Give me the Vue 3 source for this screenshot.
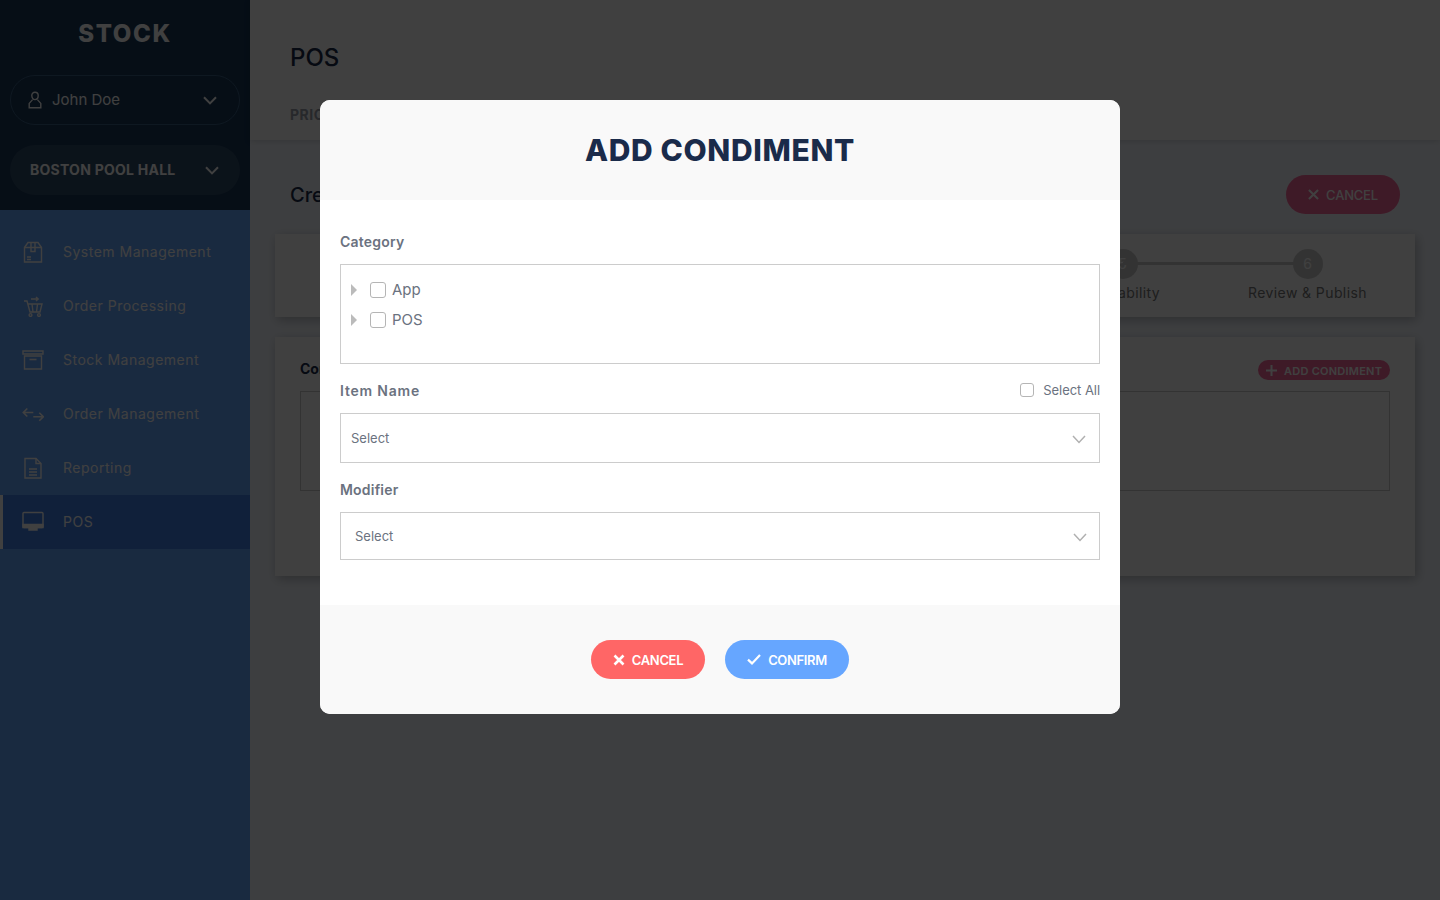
<template>
  <div class="page">
    <aside class="sidebar">
      <div class="side-top">
        <div class="brand">STOCK</div>
        <div class="user-pill">
          <svg class="user-icon" viewBox="0 0 14 18" width="14" height="18" fill="none" stroke="currentColor" stroke-width="1.4">
            <path d="M7 1.2c2 0 3.2 1.4 3.2 3.4S9 8.6 7 8.6 3.8 6.6 3.8 4.6 5 1.2 7 1.2z"/>
            <path d="M4.6 8.6 1.2 12.4v4.4h11.6v-4.4L9.4 8.6"/>
          </svg>
          <span class="user-name">John Doe</span>
          <svg class="chev" viewBox="0 0 14 9" width="14" height="9" fill="none" stroke="currentColor" stroke-width="2"><path d="M1 1.2 7 7.4l6-6.2"/></svg>
        </div>
        <div class="venue-pill">
          <span class="venue-name">BOSTON POOL HALL</span>
          <svg class="chev" viewBox="0 0 14 9" width="14" height="9" fill="none" stroke="currentColor" stroke-width="2"><path d="M1 1.2 7 7.4l6-6.2"/></svg>
        </div>
      </div>
      <nav class="side-nav">
        <a v-for="item in navItems" :key="item.label" class="nav-item" :class="{ active: item.active }">
          <svg class="nav-icon" viewBox="0 0 22 22" width="22" height="22" fill="none" stroke="currentColor" stroke-width="1.4" v-html="item.icon"></svg>
          <span class="nav-text">{{ item.label }}</span>
        </a>
      </nav>
    </aside>

    <main class="main">
      <header class="top-bar">
        <h1 class="page-title">POS</h1>
        <div class="tab-label">PRICE</div>
      </header>
      <div class="content">
        <div class="content-head">
          <h2 class="sub-title">Create</h2>
          <button class="bg-cancel">
            <svg viewBox="0 0 12 12" width="11" height="11" fill="none" stroke="currentColor" stroke-width="2.2"><path d="M1 1l10 10M11 1 1 11"/></svg>
            CANCEL
          </button>
        </div>
        <section class="card stepper">
          <div v-for="step in steps" :key="step.num" class="step">
            <div class="step-line"></div>
            <div class="step-num">{{ step.num }}</div>
            <div class="step-label">{{ step.label }}</div>
          </div>
        </section>
        <section class="card condiment">
          <div class="condiment-head">
            <span class="condiment-title">Condiment</span>
            <button class="bg-add">
              <svg viewBox="0 0 11 11" width="11" height="11" fill="none" stroke="currentColor" stroke-width="2"><path d="M5.5 0v11M0 5.5h11"/></svg>
              <span class="add-text">ADD CONDIMENT</span>
            </button>
          </div>
          <div class="condiment-box"></div>
        </section>
      </div>
    </main>

    <div class="overlay">
      <div class="modal">
        <div class="modal-head">ADD CONDIMENT</div>
        <div class="modal-body">
          <label class="field-label first">Category</label>
          <div class="tree">
            <div v-for="node in categories" :key="node" class="tree-row">
              <span class="caret"></span>
              <span class="check"></span>
              <span class="tree-text">{{ node }}</span>
            </div>
          </div>
          <div class="label-row">
            <label class="field-label item-name">Item Name</label>
            <div class="select-all"><span class="check small"></span>Select All</div>
          </div>
          <div class="select tall">
            <span>Select</span>
            <svg viewBox="0 0 14 9" width="14" height="9" fill="none" stroke="currentColor" stroke-width="1.5"><path d="M1 1l6 6.4L13 1"/></svg>
          </div>
          <label class="field-label second">Modifier</label>
          <div class="select wide">
            <span>Select</span>
            <svg viewBox="0 0 14 9" width="14" height="9" fill="none" stroke="currentColor" stroke-width="1.5"><path d="M1 1l6 6.4L13 1"/></svg>
          </div>
        </div>
        <div class="modal-foot">
          <button class="btn btn-cancel">
            <svg viewBox="0 0 12 12" width="12" height="12" fill="none" stroke="currentColor" stroke-width="2.6"><path d="M1.500 1.500l9 9M10.500 1.500l-9 9"/></svg>
            CANCEL
          </button>
          <button class="btn btn-confirm">
            <svg viewBox="0 0 14 11" width="14" height="11" fill="none" stroke="currentColor" stroke-width="2.2"><path d="M1 5.6 5 9.400 13 1"/></svg>
            CONFIRM
          </button>
        </div>
      </div>
    </div>
  </div>
</template>

<script setup>
const navItems = [
  {
    label: 'System Management',
    icon: '<path d="M2.500 6.500 6 1.500h10l3.500 5v14.500h-17z"/><path d="M2.500 6.500h17M9 1.500v9h4v-9"/><path d="M5 16h4M5 18.500h4"/>'
  },
  {
    label: 'Order Processing',
    icon: '<path d="M2 6h3l3 11h10l2-8H5.800"/><path d="M10 9l1 8M15.500 9l-1 8"/><circle cx="8.500" cy="20" r="1.400"/><circle cx="17" cy="20" r="1.400"/><path d="M9 4h7M14 2l2.200 2-2.200 2"/>'
  },
  {
    label: 'Stock Management',
    icon: '<path d="M1 2h20v3H1z"/><path d="M2.500 7h17v13h-17z"/><path d="M7.500 10.500h7" stroke-width="1.600"/>'
  },
  {
    label: 'Order Management',
    icon: '<path d="M11.300 9.500h-10M5.300 5.500l-4 4 4 4M11.300 13.700h10M17.300 9.700l4 4-4 4" stroke-width="1.600"/>'
  },
  {
    label: 'Reporting',
    icon: '<path d="M3 1.500h11l5 5v14.500H3z"/><path d="M14 1.500v5h5M7 12h8M7 15h8M7 18h8"/>'
  },
  {
    label: 'POS',
    active: true,
    icon: '<path d="M1 2.500a1 1 0 0 1 1-1h18a1 1 0 0 1 1 1v13a1 1 0 0 1-1 1H2a1 1 0 0 1-1-1z" /><path d="M1 13.500h20v3H1zM7 17h8v2H7z" fill="currentColor"/>'
  }
]

const steps = [
  { num: 1, label: '' },
  { num: 2, label: '' },
  { num: 3, label: '' },
  { num: 4, label: '' },
  { num: 5, label: 'Availability' },
  { num: 6, label: 'Review & Publish' }
]

const categories = ['App', 'POS']
</script>

<style scoped>
.page {
  position: relative;
  display: flex;
  width: 1440px;
  height: 900px;
  overflow: hidden;
  background: #f4f8ff;
  font-family: Inter, 'Open Sans', sans-serif;
  color: #1a2b4a;
}

.sidebar {
  width: 250px;
  flex-shrink: 0;
  background: #66a6ff;
  color: #fff;
}

.side-top {
  height: 210px;
  box-sizing: border-box;
  padding: 0 10px;
  background: #183858;
}

.brand {
  height: 75px;
  padding-top: 20px;
  box-sizing: border-box;
  text-align: center;
  font-size: 24px;
  line-height: 28px;
  font-weight: 800;
  letter-spacing: 1.6px;
}

.user-pill,
.venue-pill {
  display: flex;
  align-items: center;
  height: 50px;
  box-sizing: border-box;
  border-radius: 25px;
}

.user-pill {
  padding: 0 22px 0 17px;
  border: 1px solid #3a5f85;
  margin-bottom: 20px;
}

.user-name {
  flex: 1;
  margin-left: 10px;
  margin-bottom: 2px;
  font-size: 15px;
}

.venue-pill {
  padding: 0 21px 0 20px;
  background: rgba(255, 255, 255, 0.1);
}

.venue-name {
  flex: 1;
  margin-bottom: 2px;
  font-size: 14px;
  font-weight: 700;
  letter-spacing: 0.25px;
  white-space: nowrap;
}

.side-nav {
  padding-top: 15px;
}

.nav-item {
  display: flex;
  align-items: center;
  height: 54px;
  box-sizing: border-box;
  padding-left: 22px;
  font-size: 14px;
  letter-spacing: 0.5px;
}

.nav-text {
  margin-bottom: 2px;
}

.nav-item.active {
  background: #4080e8;
  border-left: 3px solid #fff;
  padding-left: 19px;
}

.nav-icon {
  margin-right: 19px;
  flex-shrink: 0;
}

.main {
  flex: 1;
  min-width: 0;
}

.top-bar {
  height: 140px;
  box-sizing: border-box;
  padding: 44px 40px 0;
  background: #fff;
  box-shadow: 0 1px 6px rgba(0, 0, 0, 0.15);
}

.page-title {
  margin: 0;
  font-size: 24px;
  line-height: 28px;
  font-weight: 500;
}

.tab-label {
  margin-top: 34px;
  font-size: 14px;
  line-height: 18px;
  font-weight: 700;
  letter-spacing: 0.5px;
  color: #9aa0aa;
}

.content {
  padding: 35px 25px 0;
}

.content-head {
  display: flex;
  align-items: center;
  justify-content: space-between;
  height: 39px;
  padding: 0 15px;
  margin-bottom: 20px;
}

.sub-title {
  margin: 0;
  font-size: 20px;
  font-weight: 500;
}

.bg-cancel,
.bg-add {
  display: flex;
  align-items: center;
  border: none;
  color: #fff;
  background: #f8689c;
  font-family: inherit;
  white-space: nowrap;
}

.bg-cancel {
  gap: 7px;
  width: 114px;
  height: 39px;
  justify-content: center;
  border-radius: 20px;
  font-size: 13px;
  font-weight: 500;
  letter-spacing: -0.2px;
}

.card {
  background: #fff;
  box-shadow: 2px 3px 10px rgba(0, 0, 0, 0.25);
}

.stepper {
  display: flex;
  height: 83px;
  padding: 0 15px;
  margin-bottom: 20px;
}

.step {
  position: relative;
  width: 185px;
  padding-top: 15px;
  text-align: center;
}

.step-line {
  position: absolute;
  top: 28px;
  left: -50%;
  right: 50%;
  height: 3px;
  background: #ccc;
}

.step:first-child .step-line {
  display: none;
}

.step-num {
  position: relative;
  width: 30px;
  height: 30px;
  margin: 0 auto;
  border-radius: 50%;
  background: #ccc;
  color: #fff;
  font-size: 14px;
  line-height: 30px;
}

.step-label {
  margin-top: 5px;
  font-size: 14px;
  line-height: 18px;
  letter-spacing: 0.4px;
  color: #777;
}

.condiment {
  height: 239px;
  box-sizing: border-box;
  padding: 23px 25px 0;
}

.condiment-head {
  display: flex;
  align-items: center;
  justify-content: space-between;
  height: 20px;
  margin-bottom: 11px;
}

.condiment-title {
  margin-bottom: 4px;
  font-size: 14px;
  font-weight: 700;
}

.bg-add {
  gap: 7px;
  height: 20px;
  width: 132px;
  padding: 0 0 0 8px;
  border-radius: 10px;
  font-size: 11px;
  font-weight: 600;
  letter-spacing: 0.25px;
}

.add-text {
  margin-top: 1px;
}

.condiment-box {
  height: 100px;
  box-sizing: border-box;
  border: 1px solid #ccc;
}

.overlay {
  position: absolute;
  inset: 0;
  display: flex;
  justify-content: center;
  padding-top: 100px;
  background: rgba(0, 0, 0, 0.75);
}

.modal {
  width: 800px;
  height: 614px;
  display: flex;
  flex-direction: column;
  border-radius: 10px;
  overflow: hidden;
  background: #fff;
}

.modal-head {
  height: 100px;
  flex-shrink: 0;
  background: #f9f9f9;
  text-align: center;
  font-size: 30px;
  line-height: 100px;
  font-weight: 800;
  letter-spacing: 0.65px;
  color: #1a2b4a;
}

.modal-body {
  flex: 1;
  padding: 33px 20px 0;
  color: #6b7280;
}

.field-label {
  display: block;
  font-size: 14px;
  line-height: 18px;
  font-weight: 600;
  letter-spacing: 0.2px;
}

.field-label.item-name {
  letter-spacing: 0.8px;
}

.field-label.first {
  margin-bottom: 13px;
}

.field-label.second {
  margin: 18px 0 13px;
}

.tree {
  height: 100px;
  box-sizing: border-box;
  padding-top: 10px;
  border: 1px solid #ccc;
}

.tree-row {
  display: flex;
  align-items: center;
  height: 30px;
  padding-left: 10px;
}

.caret {
  width: 0;
  height: 0;
  border-style: solid;
  border-width: 6px 0 6px 6px;
  border-color: transparent transparent transparent #bbb;
  margin-right: 13px;
}

.check {
  width: 16px;
  height: 16px;
  box-sizing: border-box;
  flex-shrink: 0;
  border: 1px solid #b5b5b5;
  border-radius: 3px;
  background: #fff;
}

.check.small {
  width: 14px;
  height: 14px;
}

.tree-text {
  margin-left: 6px;
  margin-bottom: 2px;
  font-size: 15px;
}

.label-row {
  display: flex;
  align-items: center;
  justify-content: space-between;
  height: 18px;
  margin: 18px 0 13px;
}

.select-all {
  display: flex;
  align-items: center;
  gap: 9px;
  margin-bottom: 2px;
  font-size: 13px;
  letter-spacing: -0.05px;
}

.select {
  display: flex;
  align-items: center;
  justify-content: space-between;
  box-sizing: border-box;
  border: 1px solid #ccc;
  font-size: 13px;
}

.select svg {
  margin-top: 2px;
  color: #b0b0b0;
}

.select.tall {
  height: 50px;
  padding: 0 13px 0 10px;
}

.select.wide {
  height: 48px;
  padding: 0 12px 0 14px;
}

.modal-foot {
  height: 109px;
  flex-shrink: 0;
  box-sizing: border-box;
  display: flex;
  justify-content: center;
  gap: 20px;
  padding-top: 35px;
  background: #f9f9f9;
}

.btn {
  display: flex;
  align-items: center;
  justify-content: center;
  gap: 7px;
  height: 39px;
  border: none;
  border-radius: 20px;
  color: #fff;
  font-family: inherit;
  font-size: 13px;
  font-weight: 600;
  letter-spacing: -0.35px;
}

.btn-cancel {
  width: 114px;
  background: #ff6666;
}

.btn-confirm {
  width: 124px;
  background: #66a6ff;
}
</style>

<style>
html,
body {
  margin: 0;
}
</style>
